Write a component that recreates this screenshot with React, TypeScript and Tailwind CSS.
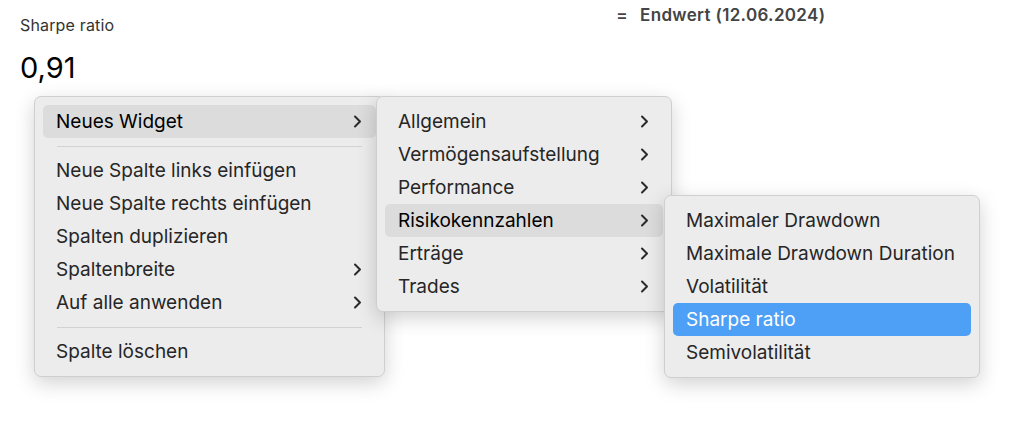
import React from "react";

type Item = { label?: string; sub?: boolean; active?: "gray" | "blue"; sep?: boolean };

function Chevron({ color = "#2a2a2a" }: { color?: string }) {
  return (
    <svg width="9" height="13" viewBox="0 0 9 13" fill="none">
      <path d="M2 1.5 L7 6.5 L2 11.5" stroke={color} strokeWidth="2" strokeLinecap="round" strokeLinejoin="round" />
    </svg>
  );
}

function Menu({ items, className }: { items: Item[]; className: string }) {
  return (
    <div
      className={`absolute rounded-[7px] border border-[#cfcfcf] bg-[#ececec] px-2 py-2 shadow-[0_6px_20px_rgba(0,0,0,0.18)] ${className}`}
    >
      {items.map((it, i) =>
        it.sep ? (
          <div key={i} className="flex h-4 items-center px-[14px]">
            <div className="h-px w-full bg-[#d2d2d2]" />
          </div>
        ) : (
          <div
            key={i}
            className={`flex h-[33px] items-center justify-between rounded-[5px] pl-[13px] pr-[14px] ${
              it.active === "gray" ? "bg-[#dcdcdc]" : it.active === "blue" ? "bg-[#4ea0f6] text-white" : "text-[#262626]"
            }`}
          >
            <span className="pt-[2px]">{it.label}</span>
            {it.sub && <Chevron />}
          </div>
        )
      )}
    </div>
  );
}

export default function App() {
  const first: Item[] = [
    { label: "Neues Widget", sub: true, active: "gray" },
    { sep: true },
    { label: "Neue Spalte links einfügen" },
    { label: "Neue Spalte rechts einfügen" },
    { label: "Spalten duplizieren" },
    { label: "Spaltenbreite", sub: true },
    { label: "Auf alle anwenden", sub: true },
    { sep: true },
    { label: "Spalte löschen" },
  ];
  const second: Item[] = [
    { label: "Allgemein", sub: true },
    { label: "Vermögensaufstellung", sub: true },
    { label: "Performance", sub: true },
    { label: "Risikokennzahlen", sub: true, active: "gray" },
    { label: "Erträge", sub: true },
    { label: "Trades", sub: true },
  ];
  const third: Item[] = [
    { label: "Maximaler Drawdown" },
    { label: "Maximale Drawdown Duration" },
    { label: "Volatilität" },
    { label: "Sharpe ratio", active: "blue" },
    { label: "Semivolatilität" },
  ];

  return (
    <div className="relative h-[424px] w-[1024px] overflow-hidden bg-white font-['Inter',sans-serif]">
      <div className="flex">
        <div className="pl-5 pt-[13px]">
          <div className="text-[16px] tracking-[0.01em] text-[#333]">Sharpe ratio</div>
          <div className="mt-[16px] text-[29px] leading-none text-black">0,91</div>
        </div>
        <div className="ml-[502px] pt-[3px] text-[17px] font-semibold tracking-[0.02em] text-[#444]">
          <span className="mr-[12px]">=</span>Endwert (12.06.2024)
        </div>
      </div>

      <div className="text-[19px]">
        <Menu items={first} className="left-[34px] top-[96px] w-[351px]" />
        <Menu items={second} className="left-[376px] top-[96px] w-[296px]" />
        <Menu items={third} className="left-[664px] top-[195px] w-[316px]" />
      </div>
    </div>
  );
}
